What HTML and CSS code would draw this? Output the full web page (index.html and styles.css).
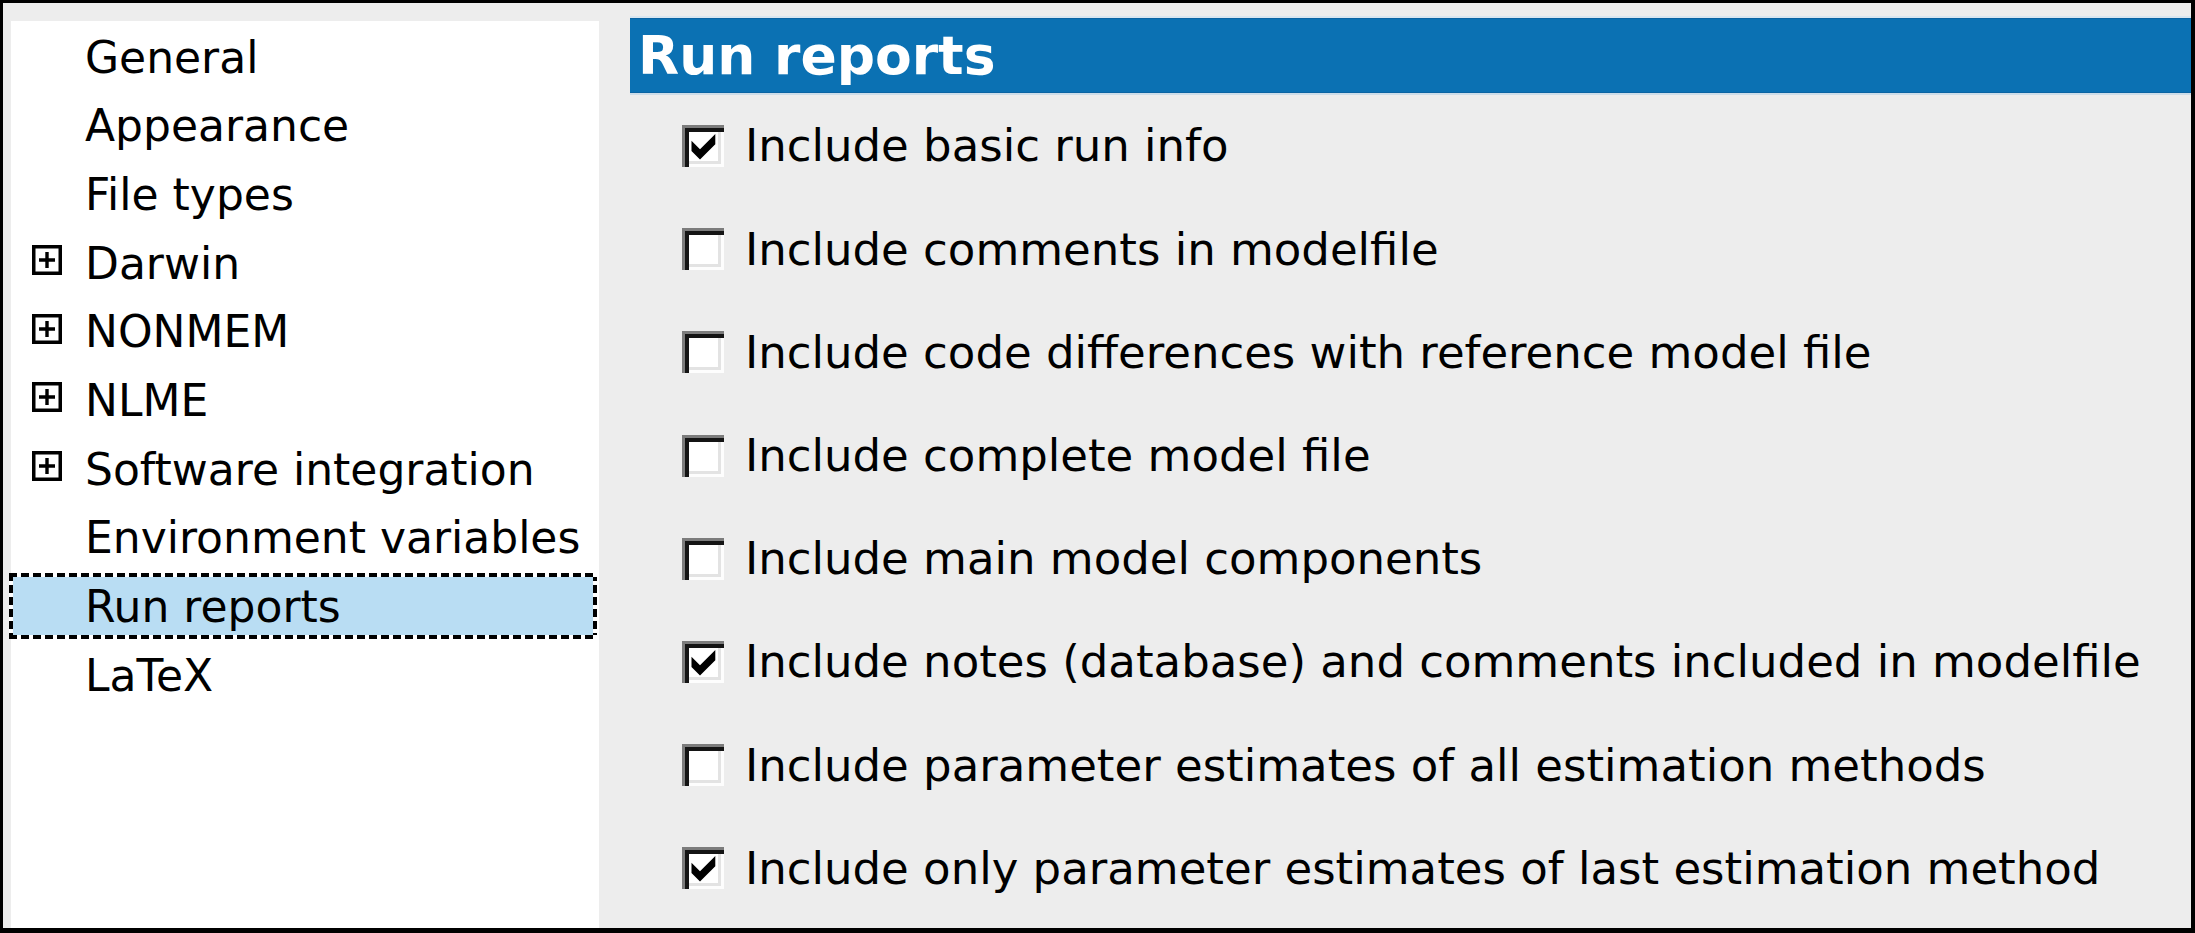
FILE: index.html
```html
<!DOCTYPE html>
<html>
<head>
<meta charset="utf-8">
<title>Options - Run reports</title>
<link rel="stylesheet" href="styles.css">
</head>
<body>
<div class="window">
  <aside class="tree">
    <div class="node leaf"><span class="label">General</span></div>
    <div class="node leaf"><span class="label">Appearance</span></div>
    <div class="node leaf"><span class="label">File types</span></div>
    <div class="node"><svg class="exp" viewBox="0 0 30 30"><rect x="1.75" y="1.75" width="26.5" height="26.5" fill="#fff" stroke="#000" stroke-width="3.5"/><path d="M7 15H23M15 7V23" stroke="#000" stroke-width="3.4"/></svg><span class="label">Darwin</span></div>
    <div class="node"><svg class="exp" viewBox="0 0 30 30"><rect x="1.75" y="1.75" width="26.5" height="26.5" fill="#fff" stroke="#000" stroke-width="3.5"/><path d="M7 15H23M15 7V23" stroke="#000" stroke-width="3.4"/></svg><span class="label">NONMEM</span></div>
    <div class="node"><svg class="exp" viewBox="0 0 30 30"><rect x="1.75" y="1.75" width="26.5" height="26.5" fill="#fff" stroke="#000" stroke-width="3.5"/><path d="M7 15H23M15 7V23" stroke="#000" stroke-width="3.4"/></svg><span class="label">NLME</span></div>
    <div class="node"><svg class="exp" viewBox="0 0 30 30"><rect x="1.75" y="1.75" width="26.5" height="26.5" fill="#fff" stroke="#000" stroke-width="3.5"/><path d="M7 15H23M15 7V23" stroke="#000" stroke-width="3.4"/></svg><span class="label">Software integration</span></div>
    <div class="node leaf"><span class="label">Environment variables</span></div>
    <div class="node leaf sel"><span class="label">Run reports</span></div>
    <div class="node leaf"><span class="label">LaTeX</span></div>
  </aside>
  <main class="page">
    <h1 class="title">Run reports</h1>
    <ul class="options">
      <li class="opt"><span class="cb"><svg viewBox="0 0 42 42"><polygon points="9.5,15.8 18,24.3 33.3,9 33.3,19.2 18,34.5 9.5,26" fill="#000"/></svg></span><span class="opt-label">Include basic run info</span></li>
      <li class="opt"><span class="cb"></span><span class="opt-label">Include comments in modelfile</span></li>
      <li class="opt"><span class="cb"></span><span class="opt-label">Include code differences with reference model file</span></li>
      <li class="opt"><span class="cb"></span><span class="opt-label">Include complete model file</span></li>
      <li class="opt"><span class="cb"></span><span class="opt-label">Include main model components</span></li>
      <li class="opt"><span class="cb"><svg viewBox="0 0 42 42"><polygon points="9.5,15.8 18,24.3 33.3,9 33.3,19.2 18,34.5 9.5,26" fill="#000"/></svg></span><span class="opt-label">Include notes (database) and comments included in modelfile</span></li>
      <li class="opt"><span class="cb"></span><span class="opt-label">Include parameter estimates of all estimation methods</span></li>
      <li class="opt"><span class="cb"><svg viewBox="0 0 42 42"><polygon points="9.5,15.8 18,24.3 33.3,9 33.3,19.2 18,34.5 9.5,26" fill="#000"/></svg></span><span class="opt-label">Include only parameter estimates of last estimation method</span></li>
    </ul>
  </main>
</div>
</body>
</html>
```

FILE: styles.css
```css
html, body {
  margin: 0;
  padding: 0;
}

body {
  background: #ededed;
  font-family: "DejaVu Sans", "Noto Sans", sans-serif;
  color: #000;
}

.window {
  width: 2195px;
  height: 933px;
  box-sizing: border-box;
  border-style: solid;
  border-color: #000;
  border-width: 3px 4px 5px 3px;
  background: #ededed;
  display: flex;
  align-items: stretch;
  overflow: hidden;
}

/* ---------- left tree ---------- */
.tree {
  flex: none;
  width: 588px;
  margin: 18px 0 0 8px;
  padding-top: 2.5px;
  box-sizing: border-box;
  background: #fff;
  font-size: 44px;
}

.node {
  display: flex;
  height: 68.7px;
  line-height: 68.7px;
  padding-left: 21px;
  white-space: nowrap;
}

.node.leaf {
  padding-left: 74px;
}

.exp {
  flex: none;
  width: 30px;
  height: 30px;
  margin: 15.5px 23px 0 0;
}

.node.sel {
  height: 65.5px;
  margin: 0 2px 3.2px -2px;
  padding-left: 76px;
  background:
    repeating-linear-gradient(90deg, #000 0 8px, #fff 8px 12px) left top / 100% 4px no-repeat,
    repeating-linear-gradient(90deg, #000 0 8px, #fff 8px 12px) left bottom / 100% 4px no-repeat,
    repeating-linear-gradient(180deg, #000 0 8px, #fff 8px 12px) left top / 4px 100% no-repeat,
    repeating-linear-gradient(180deg, #000 0 8px, #fff 8px 12px) right top / 4px 100% no-repeat,
    #b9ddf3;
}

/* ---------- right page ---------- */
.page {
  flex: 1;
  margin: 15px 0 0 31px;
  min-width: 0;
}

.title {
  margin: 0;
  height: 75px;
  box-sizing: border-box;
  padding-left: 8px;
  background: #0b71b3;
  border-top: 1px solid #0a64a3;
  border-bottom: 1px solid #0a64a3;
  box-shadow: 0 -2px 0 #d9e6f0, 0 2px 0 #cddde9;
  color: #fff;
  font-size: 53.5px;
  font-weight: bold;
  line-height: 73px;
  white-space: nowrap;
}

.options {
  list-style: none;
  margin: 0;
  padding: 1.4px 0 0 52px;
}

.opt {
  display: flex;
  align-items: center;
  height: 103.2px;
  white-space: nowrap;
}

.cb {
  flex: none;
  display: block;
  width: 42px;
  height: 42px;
  margin-right: 21px;
  background: #fff;
  box-shadow:
    inset 3px 3px 0 #7c7c7c,
    inset 7px 7px 0 #141414,
    inset -3px -3px 0 #fdfdfd,
    inset -6px -6px 0 #e3e3e3;
}

.cb svg {
  display: block;
  width: 42px;
  height: 42px;
}

.opt-label {
  font-size: 45px;
  line-height: normal;
}
```
